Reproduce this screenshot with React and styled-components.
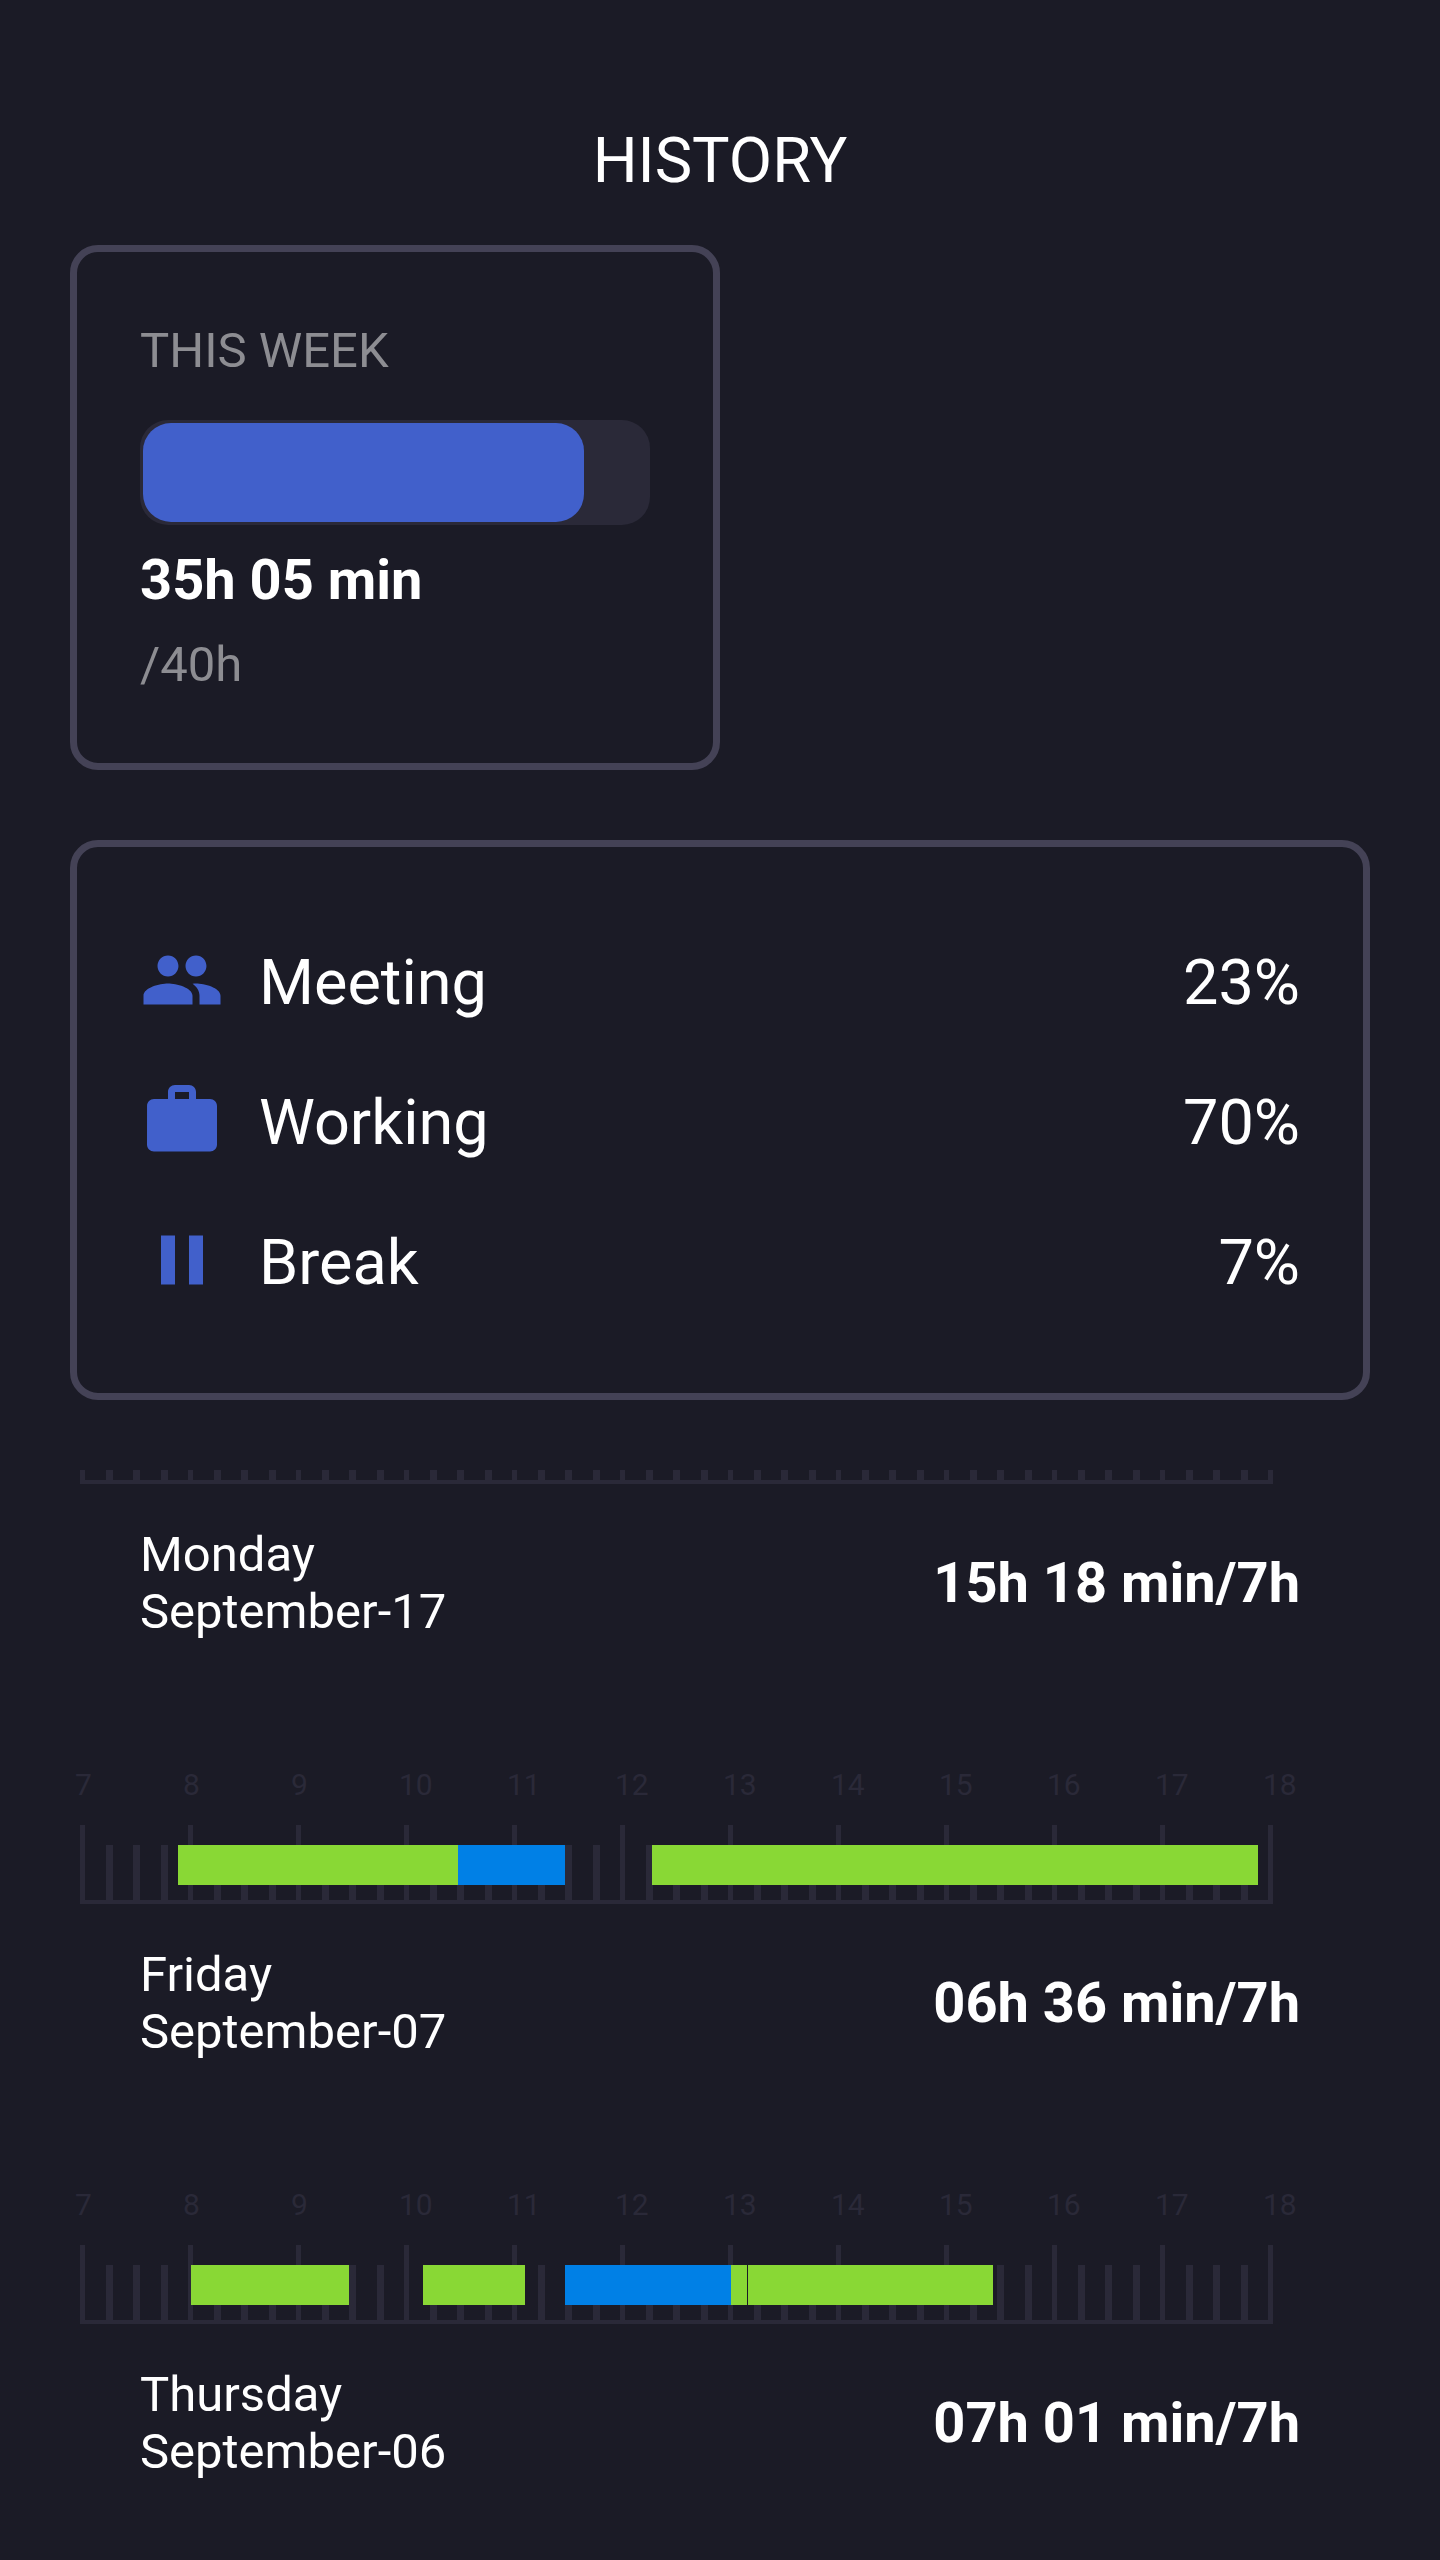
import React from "react";
import styled, { createGlobalStyle } from "styled-components";
import { MdPeople, MdWork, MdPause } from "react-icons/md";

const color = {
  page: "#1b1b26",
  outline: "#444256",
  track: "#2a2938",
  accent: "#4160cb",
  text: "#ffffff",
  muted: "#8d8d92",
  working: "#89d835",
  meeting: "#0080e6",
};

const GlobalStyle = createGlobalStyle`
  *, *::before, *::after { box-sizing: border-box; }
  html { background: ${color.page}; }
  body {
    margin: 0;
    background: ${color.page};
    color: ${color.text};
    font-family: Roboto, "Liberation Sans", sans-serif;
    font-size: 49px;
    line-height: 57px;
  }
`;

const Page = styled.main`
  display: flex;
  flex-direction: column;
  padding: 124px 70px 0;
`;

const Title = styled.h1`
  margin: 0 0 47px;
  font-size: 63px;
  font-weight: 400;
  line-height: 74px;
  text-align: center;
`;

const Card = styled.section`
  width: ${(p) => (p.$half ? "50%" : "100%")};
  margin-bottom: 70px;
  padding: 63px;
  border: 7px solid ${color.outline};
  border-radius: 28px;
`;

const CardTitle = styled.h2`
  margin: 0;
  padding: 7px 0 41px;
  color: ${color.muted};
  font-size: 49px;
  font-weight: 400;
  line-height: 57px;
`;

const Progress = styled.div`
  height: 105px;
  padding: 3px;
  border-radius: 28px;
  background: ${color.track};
`;

const ProgressFill = styled.div`
  height: 100%;
  border-radius: 28px;
  background: ${color.accent};
`;

const Amount = styled.p`
  margin: 0;
  font-size: 56px;
  font-weight: 700;
  line-height: 66px;
`;

const WeekAmount = styled(Amount)`
  padding: 22px 0 19px;
`;

const Goal = styled.p`
  margin: 0;
  padding: 4px 0 7px;
  color: ${color.muted};
`;

const Shares = styled.ul`
  margin: 0;
  padding: 0;
  list-style: none;
`;

const Share = styled.li`
  display: flex;
  align-items: center;
  gap: 35px;
  height: 140px;
  font-size: 63px;
  line-height: 74px;

  svg {
    flex: none;
    width: 84px;
    height: 84px;
    color: ${color.accent};
  }
`;

const ShareValue = styled.span`
  padding-top: 6px;
`;

const ShareName = styled(ShareValue)`
  flex: 1;
`;

const Day = styled.article`
  padding-bottom: 127px;
`;

const Timeline = styled.div`
  margin: 0 97px 0 10px;
`;

const Hours = styled.div`
  display: flex;
  margin: 0 10px 23px -5px;
  color: ${color.track};
  font-size: 30px;
  line-height: 35px;
`;

const Hour = styled.span`
  flex: ${(p) => (p.$last ? "0 0 0" : "1 1 0")};
  width: 0;
`;

const Ruler = styled.div`
  position: relative;
  display: flex;
  align-items: flex-end;
  height: ${(p) => (p.$cut ? "14px" : "79px")};
  border-bottom: 4px solid ${color.track};
`;

const Tick = styled.i`
  flex: ${(p) => (p.$last ? "0 0 5px" : "1 1 0")};
  height: ${(p) => (p.$hour ? "75px" : "55px")};
  max-height: 100%;
  border-left: ${(p) => (p.$hour ? "5px" : "7px")} solid ${color.track};
`;

const Spans = styled.div`
  position: absolute;
  top: 20px;
  left: 0;
  right: 5px;
  height: 40px;
`;

const Span = styled.div`
  position: absolute;
  top: 0;
  height: 100%;
  background: ${(p) => color[p.$kind]};
`;

const Summary = styled.div`
  display: flex;
  align-items: center;
  justify-content: space-between;
  padding: 42px 70px 0;
`;

const DayName = styled.h3`
  display: flex;
  flex-direction: column;
  margin: 0;
  font-size: 49px;
  font-weight: 400;
  line-height: 57px;
`;

const FIRST = 7;
const LAST = 18;
const HOURS = Array.from({ length: LAST - FIRST + 1 }, (_, i) => FIRST + i);
const QUARTERS = Array.from({ length: (LAST - FIRST) * 4 + 1 }, (_, i) => i);

const shares = [
  { name: "Meeting", value: "23%", Icon: MdPeople },
  { name: "Working", value: "70%", Icon: MdWork },
  { name: "Break", value: "7%", Icon: MdPause },
];

// Spans are [kind, start, end], in hours of the day.
const days = [
  { day: "Monday", date: "September-17", total: "15h 18 min/7h", cut: true, spans: [] },
  {
    day: "Friday",
    date: "September-07",
    total: "06h 36 min/7h",
    spans: [
      ["working", 7.908, 10.5],
      ["meeting", 10.5, 11.491],
      ["working", 12.296, 17.908],
    ],
  },
  {
    day: "Thursday",
    date: "September-06",
    total: "07h 01 min/7h",
    spans: [
      ["working", 8.028, 9.491],
      ["working", 10.176, 11.12],
      ["meeting", 11.491, 13.028],
      ["working", 13.028, 13.176],
      ["working", 13.186, 15.454],
    ],
  },
];

const percent = (hours) => `${(hours / (LAST - FIRST)) * 100}%`;

function DayEntry({ day, date, total, cut, spans }) {
  return (
    <Day>
      <Timeline>
        {!cut && (
          <Hours>
            {HOURS.map((h) => (
              <Hour key={h} $last={h === LAST}>{h}</Hour>
            ))}
          </Hours>
        )}
        <Ruler $cut={cut}>
          {QUARTERS.map((q) => (
            <Tick key={q} $hour={q % 4 === 0} $last={q === QUARTERS.length - 1} />
          ))}
          <Spans>
            {spans.map(([kind, start, end]) => (
              <Span
                key={start}
                $kind={kind}
                style={{ left: percent(start - FIRST), width: percent(end - start) }}
              />
            ))}
          </Spans>
        </Ruler>
      </Timeline>
      <Summary>
        <DayName>
          <span>{day}</span>
          <span>{date}</span>
        </DayName>
        <Amount>{total}</Amount>
      </Summary>
    </Day>
  );
}

export default function App() {
  return (
    <>
      <GlobalStyle />
      <Page>
        <Title>HISTORY</Title>
        <Card $half>
          <CardTitle>THIS WEEK</CardTitle>
          <Progress>
            <ProgressFill style={{ width: `${(35 / 40) * 100}%` }} />
          </Progress>
          <WeekAmount>35h 05 min</WeekAmount>
          <Goal>/40h</Goal>
        </Card>
        <Card>
          <Shares>
            {shares.map(({ name, value, Icon }) => (
              <Share key={name}>
                <Icon aria-hidden="true" />
                <ShareName>{name}</ShareName>
                <ShareValue>{value}</ShareValue>
              </Share>
            ))}
          </Shares>
        </Card>
        {days.map((d) => (
          <DayEntry key={d.date} {...d} />
        ))}
      </Page>
    </>
  );
}
